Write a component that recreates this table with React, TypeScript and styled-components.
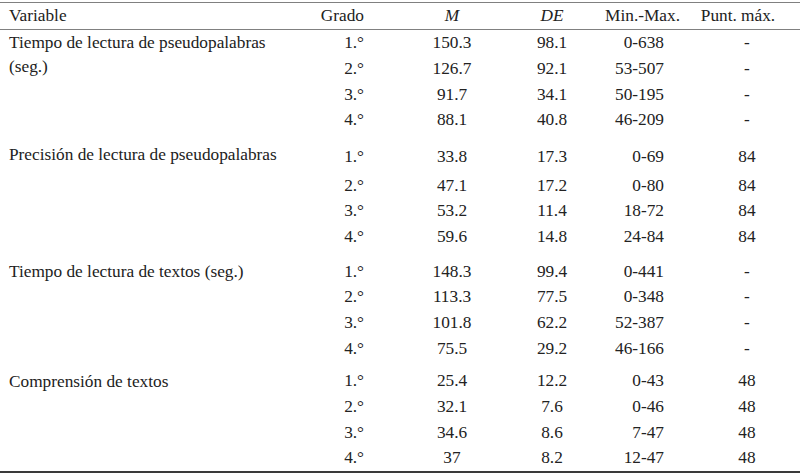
import React from 'react'
import styled, { createGlobalStyle } from 'styled-components'

const GlobalStyle = createGlobalStyle`
  html, body {
    margin: 0;
    padding: 0;
    background: #fff;
  }
  body {
    font-family: "Liberation Serif", "DejaVu Serif", serif;
    font-size: 17.3px;
    color: #222;
  }
`

const columns = '80px 104px 96px 94px 106px'

const Table = styled.div`
  width: 800px;
  padding-top: 2px;
`

const HeaderRow = styled.div`
  display: flex;
  height: 26px;
  align-items: center;
  border-top: 1px solid #808080;
  border-bottom: 1px solid #808080;
`

const VariableHead = styled.div`
  width: 320px;
  padding-left: 9px;
  box-sizing: border-box;
`

const Cells = styled.div`
  display: grid;
  grid-template-columns: ${columns};
  align-items: center;
`

const Cell = styled.div<{ $align?: 'left' | 'right' | 'center'; $pad?: number; $italic?: boolean }>`
  text-align: ${(p) => p.$align ?? 'center'};
  padding-right: ${(p) => (p.$pad ? `${p.$pad}px` : '0')};
  font-style: ${(p) => (p.$italic ? 'italic' : 'normal')};
  white-space: nowrap;
`

const Body = styled.div`
  border-bottom: 2px solid #3a3a3a;
`

const Group = styled.div<{ $gap: number }>`
  display: flex;
  margin-top: ${(p) => p.$gap}px;
`

const Label = styled.div`
  width: 320px;
  padding-left: 9px;
  padding-top: 1px;
  box-sizing: border-box;
  line-height: 24px;
  & > span {
    display: block;
    max-width: 285px;
  }
`

const Rows = styled.div`
  display: flex;
  flex-direction: column;
`

const Row = styled(Cells)<{ $h: number }>`
  height: ${(p) => p.$h}px;
`

type Entry = [string, string, string, string, string]
type Section = { label: string; gap: number; heights: number[]; rows: Entry[] }

const sections: Section[] = [
  {
    label: 'Tiempo de lectura de pseudopalabras (seg.)',
    gap: 0,
    heights: [26, 25.7, 25.7, 25.7],
    rows: [
      ['1.°', '150.3', '98.1', '0-638', '-'],
      ['2.°', '126.7', '92.1', '53-507', '-'],
      ['3.°', '91.7', '34.1', '50-195', '-'],
      ['4.°', '88.1', '40.8', '46-209', '-'],
    ],
  },
  {
    label: 'Precisión de lectura de pseudopalabras',
    gap: 9,
    heights: [30.7, 25.7, 25.7, 25.7],
    rows: [
      ['1.°', '33.8', '17.3', '0-69', '84'],
      ['2.°', '47.1', '17.2', '0-80', '84'],
      ['3.°', '53.2', '11.4', '18-72', '84'],
      ['4.°', '59.6', '14.8', '24-84', '84'],
    ],
  },
  {
    label: 'Tiempo de lectura de textos (seg.)',
    gap: 9,
    heights: [25.7, 25.7, 25.7, 25.7],
    rows: [
      ['1.°', '148.3', '99.4', '0-441', '-'],
      ['2.°', '113.3', '77.5', '0-348', '-'],
      ['3.°', '101.8', '62.2', '52-387', '-'],
      ['4.°', '75.5', '29.2', '46-166', '-'],
    ],
  },
  {
    label: 'Comprensión de textos',
    gap: 7,
    heights: [25.7, 25.7, 25.7, 25.7],
    rows: [
      ['1.°', '25.4', '12.2', '0-43', '48'],
      ['2.°', '32.1', '7.6', '0-46', '48'],
      ['3.°', '34.6', '8.6', '7-47', '48'],
      ['4.°', '37', '8.2', '12-47', '48'],
    ],
  },
]

const DataRow = ({ entry, h }: { entry: Entry; h: number }) => (
  <Row $h={h}>
    <Cell $align="right" $pad={36}>{entry[0]}</Cell>
    <Cell>{entry[1]}</Cell>
    <Cell>{entry[2]}</Cell>
    <Cell $align="right" $pad={30}>{entry[3]}</Cell>
    <Cell>{entry[4]}</Cell>
  </Row>
)

export default function App() {
  return (
    <>
      <GlobalStyle />
      <Table>
        <HeaderRow>
          <VariableHead>Variable</VariableHead>
          <Cells>
            <Cell $align="right" $pad={36}>Grado</Cell>
            <Cell $italic>M</Cell>
            <Cell $italic>DE</Cell>
            <Cell $align="right" $pad={14}>Min.-Max.</Cell>
            <Cell $pad={18}>Punt. máx.</Cell>
          </Cells>
        </HeaderRow>
        <Body>
          {sections.map((s) => (
            <Group key={s.label} $gap={s.gap}>
              <Label>
                <span>{s.label}</span>
              </Label>
              <Rows>
                {s.rows.map((r, i) => (
                  <DataRow key={r[0]} entry={r} h={s.heights[i]} />
                ))}
              </Rows>
            </Group>
          ))}
        </Body>
      </Table>
    </>
  )
}
